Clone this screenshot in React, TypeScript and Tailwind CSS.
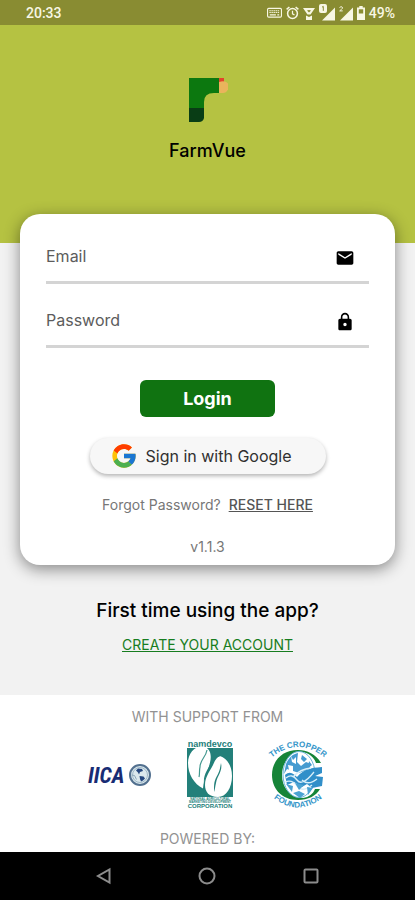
import { useState } from 'react';
import { MdEmail, MdLock } from 'react-icons/md';
import { FcGoogle } from 'react-icons/fc';

function StatusBar() {
  return (
    <div className="flex h-[25px] items-center justify-between bg-[#898c32] pr-5 pl-[26px] font-[Roboto,sans-serif] text-sm font-medium text-[#f8f7e4]">
      <span>20:33</span>
      <div className="flex items-center gap-1">
        <svg width="15" height="12" viewBox="0 0 16 12" fill="none" stroke="currentColor">
          <rect x="0.6" y="1.1" width="14.8" height="9.3" rx="1.2" strokeWidth="1.2" />
          <path d="M2.5 3.6h11M2.5 5.5h11" strokeWidth="1" strokeDasharray="1.6 0.6" />
          <path d="M3 8h6.5M11 8h2" strokeWidth="1.3" />
        </svg>
        <svg width="13" height="14" viewBox="0 0 13 14" fill="none" stroke="currentColor">
          <circle cx="6.5" cy="7.5" r="4.9" strokeWidth="1.5" />
          <path d="M6.500 4.800v3l2 1.300" strokeWidth="1.2" />
          <path d="M0.6 3.3 3.4 1M12.4 3.3 9.6 1" strokeWidth="1.5" />
        </svg>
        <svg width="12" height="14" viewBox="0 0 12 14">
          <path d="M0 2h12L7.500 8.500h-3Z" fill="currentColor" />
          <path d="M4 4.500q2-.8 4 0L6 6.500Z" fill="#898c32" />
          <path d="M3 9.500 6 11l3-1.500V14H3Z" fill="currentColor" />
        </svg>
        <svg width="16" height="18" viewBox="0 0 16 18">
          <path d="M16 3.500v13H3Z" fill="currentColor" />
          <rect x="0" y="0" width="8" height="9" rx="2" fill="currentColor" />
          <path d="M3 3.200 4.300 2.400v4.400" fill="none" stroke="#898c32" strokeWidth="1" />
        </svg>
        <svg width="14" height="18" viewBox="0 0 14 18">
          <path d="M14 3.500v13H1Z" fill="currentColor" />
          <path d="M.7 3.700c.2-1.300 2.800-1.400 2.800.2 0 1-1.600 1.700-2.800 3h3" fill="none" stroke="currentColor" />
        </svg>
        <svg width="8" height="14" viewBox="0 0 8 14">
          <path d="M2.300 0h3.400v1.400H8V14H0V1.400h2.300Z" fill="currentColor" />
          <rect x="1.800" y="3.300" width="4.400" height="4.200" fill="#898c32" />
        </svg>
        <span>49%</span>
      </div>
    </div>
  );
}

function FarmVueLogo() {
  return (
    <svg width="40" height="46" viewBox="0 0 40 46">
      <path d="M1 1h30v15h-5q-10 0-10 9v7H1Z" fill="#0c780f" />
      <path d="M1 31h15v10q-1 4-5 4H1Z" fill="#093d15" />
      <path d="M31 1h5v5h-5Z" fill="#e3432b" />
      <path d="M31 5q6-2 9 1.500v6q-2 3.500-5 3.500h-4Z" fill="#eab45c" />
    </svg>
  );
}

function IicaLogo() {
  return (
    <svg width="64" height="30" viewBox="0 0 64 30" role="img" aria-label="IICA" className="overflow-visible">
      <text x="0" y="23" fill="#182c74" className="font-['Liberation_Sans_Narrow','Roboto_Condensed','Open_Sans_Condensed',Roboto,sans-serif] text-[22px] leading-none font-bold italic">
        IICA
      </text>
      <circle cx="52" cy="15" r="10" fill="#dbe8ed" stroke="#52708f" strokeWidth="2" />
      <circle cx="52" cy="15" r="7.500" fill="none" stroke="#9fb8c8" />
      <path d="M48 10.500 50 8.500l4 .5 1 2-3 1-1 2.500-1-2Z" fill="#25477f" />
      <path d="m51.500 16 4 .5 1.500 2-2 2-2 1-1-2.500Z" fill="#25477f" />
      <path d="m43.500 15 3 .5 2 4" fill="none" stroke="#8ba7ba" />
    </svg>
  );
}

function NamdevcoLogo() {
  return (
    <svg width="46" height="68" viewBox="0 0 46 68" role="img" aria-label="NAMDEVCO" fill="#23807a" className="overflow-visible">
      <path d="M0 7h46V56H0Z" />
      <text x="23" y="6" textAnchor="middle" className="font-['Liberation_Sans',sans-serif] text-[9px] leading-none font-bold">
        namdevco
      </text>
      <path d="M1 22C1 12 8 4.500 16 5.500c7 1 9 8 7 16-2 9-6 15-7 26C7 43 1 33 1 22Z" fill="#fff" />
      <path d="M18 44c0-8 5-14 8-20 2-5 4-8 7-9 7 2 12 10 12 20 0 12-6 21-14 21-9 0-13-5-13-12Z" fill="#fff" />
      <path d="M20 9c-1 7-7 10-7 17-1 4 0 6-1 10" fill="none" stroke="#43988f" strokeWidth="1.200" />
      <path d="M34 22c2 8-4 13-5 20-1 4-1 7-2 9 0-9 0-11 4-18 2-4 2-6 3-11Z" />
      <path d="M25 20c2-5 2-8 4-10 2 1 4 3 5 5-5 0-8 6-11 12-3 6-5 10-6 15-1-9 5-15 8-22Z" />
      <g textAnchor="middle" className="font-['Liberation_Sans',sans-serif] text-[3px] leading-none font-bold">
        <text x="23" y="59">NATIONAL AGRICULTURAL</text>
        <text x="23" y="62">MARKETING DEVELOPMENT</text>
        <text x="23" y="67" className="text-[6px] leading-none">CORPORATION</text>
      </g>
    </svg>
  );
}

function CropperLogo() {
  return (
    <svg width="60" height="68" viewBox="-1 0 60 68" role="img" aria-label="The Cropper Foundation" className="overflow-visible">
      <defs>
        <path id="arc-top" d="M1 18Q29 -6 57 18" />
        <path id="arc-bottom" d="M1 54Q29 79 57 54" />
      </defs>
      <path d="M52 22C47 13 38 9 29 9 13 9 3 20 3 34s10 25 26 25c10 0 18-4 22-11h-5c-2 5-6 8-12 9C20 56 13 46 13 34S20 13 33 11c7 1 12 5 14 11Z" fill="#168438" />
      <ellipse cx="30" cy="33.500" rx="16" ry="23" fill="#fff" stroke="#67b4d9" />
      <path d="M17 23c3-7 7-10 12-11l-1 9 4 4 5-4 5 2-2 5-10 4-12-4-3 5Z" fill="#459bd0" />
      <path d="M22 15l2 4 3-3v7l-4-2ZM33 13l6 3-3 4-4-2ZM19 24l5 1v6l-4-2Z" fill="#fff" />
      <path d="M33 14l5 4-3 3-3-3ZM40 20l3 4-4 3Z" fill="#459bd0" />
      <path d="M16 34c5-5 9-1 12 2 7-8 13-9 25-10v6l-7 3 8 1-1 9-10 2-5-4-5 3-8-5-7 3Z" fill="#318fc9" />
      <g fill="none" stroke="#d8eff9" strokeWidth="1.300">
        <path d="M17 37q6-5 11 2t17-8M24 36q7-8 18-9M33 39q6 6 15-1M16 41q7-3 12 4t15-1" />
      </g>
      <path d="m17 43 7 2-1 6ZM26 42l9 2-5 5ZM38 46l6 1-5 7ZM24 52l6-2 6 3-5 4Z" fill="#4ba3d2" />
      <g fill="#3495c9" textAnchor="middle" className="font-['Liberation_Sans',sans-serif] text-[8px] leading-none font-bold">
        <text>
          <textPath href="#arc-top" startOffset="50%">THE CROPPER</textPath>
        </text>
        <text>
          <textPath href="#arc-bottom" startOffset="50%">FOUNDATION</textPath>
        </text>
      </g>
    </svg>
  );
}

function Field({ id, label, type, value, onChange, icon: Icon }: {
  id: string;
  label: string;
  type: string;
  value: string;
  onChange: (value: string) => void;
  icon: React.ElementType;
}) {
  return (
    <div className="flex h-16 items-center gap-3 border-b-[3px] border-[#d4d4d4] pt-2.5 pr-[14px]">
      <label htmlFor={id} className="text-base text-[#5c5c5c]">{label}</label>
      <input
        id={id}
        type={type}
        value={value}
        onChange={(e) => onChange(e.target.value)}
        className="min-w-0 flex-1 bg-transparent text-base text-gray-800 outline-none"
      />
      <Icon size={20} className="mt-1 text-black" />
    </div>
  );
}

function NavBar() {
  return (
    <nav className="flex h-12 items-center justify-around bg-black px-[52px] text-[#8c8c8c]">
      <button type="button" aria-label="Back">
        <svg width="20" height="20" viewBox="0 0 20 20" fill="none" stroke="currentColor" strokeWidth="2">
          <path d="M15.500 3.500v13L4 10Z" />
        </svg>
      </button>
      <button type="button" aria-label="Home">
        <svg width="20" height="20" viewBox="0 0 20 20" fill="none" stroke="currentColor" strokeWidth="2">
          <circle cx="10" cy="10" r="7.500" />
        </svg>
      </button>
      <button type="button" aria-label="Recent apps">
        <svg width="20" height="20" viewBox="0 0 20 20" fill="none" stroke="currentColor" strokeWidth="2">
          <rect x="3.500" y="3.500" width="13" height="13" rx="1" />
        </svg>
      </button>
    </nav>
  );
}

export default function App() {
  const [email, setEmail] = useState('');
  const [password, setPassword] = useState('');

  return (
    <div className="flex min-h-screen flex-col bg-white font-[Inter,sans-serif]">
      <StatusBar />

      <header className="flex h-[218px] flex-col items-center bg-[#b5c242] pt-[52px]">
        <FarmVueLogo />
        <h1 className="mt-4 text-lg leading-6 font-medium text-black">FarmVue</h1>
      </header>

      <main className="bg-[#f2f2f2] px-5 pb-10">
        <form
          onSubmit={(e) => e.preventDefault()}
          className="-mt-[29px] flex flex-col items-center rounded-[20px] bg-white px-[26px] pt-1.5 pb-2 shadow-[0_4px_16px_rgba(0,0,0,0.45)]"
        >
          <div className="w-full">
            <Field id="email" label="Email" type="email" value={email} onChange={setEmail} icon={MdEmail} />
            <Field id="password" label="Password" type="password" value={password} onChange={setPassword} icon={MdLock} />
          </div>
          <button type="submit" className="mt-8 h-[37px] w-[135px] rounded-md bg-[#107311] text-lg font-bold text-white">
            Login
          </button>
          <button
            type="button"
            className="mt-[21px] flex h-9 w-[236px] items-center gap-2 rounded-full bg-[#f7f7f7] pl-5 text-base text-[#303030] shadow-[0_2px_4px_rgba(0,0,0,0.3)]"
          >
            <FcGoogle size={28} />
            Sign in with Google
          </button>
          <p className="mt-[21px] flex gap-2 text-sm text-[#777]">
            Forgot Password?
            <a href="#reset" className="font-medium text-[#555] underline">RESET HERE</a>
          </p>
          <p className="mt-[22px] text-sm text-[#777]">v1.1.3</p>
        </form>

        <div className="mt-[34px] flex flex-col items-center gap-3">
          <h2 className="text-[19px] leading-6 font-medium text-black">First time using the app?</h2>
          <a href="#create" className="text-sm text-[#177d20] underline">CREATE YOUR ACCOUNT</a>
        </div>
      </main>

      <footer className="flex flex-1 flex-col items-center pt-3 text-sm text-[#929292]">
        <p>WITH SUPPORT FROM</p>
        <div className="mt-3.5 flex items-center gap-[35px]">
          <IicaLogo />
          <NamdevcoLogo />
          <CropperLogo />
        </div>
        <p className="mt-5">POWERED BY:</p>
      </footer>

      <NavBar />
    </div>
  );
}
